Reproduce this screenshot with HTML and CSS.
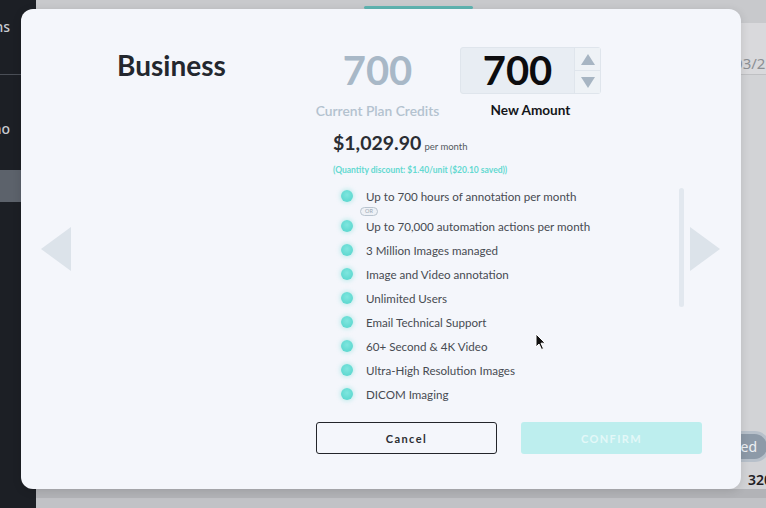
FILE: index.html
```html
<!DOCTYPE html>
<html>
<head>
<meta charset="utf-8">
<link rel="stylesheet" href="styles.css">
</head>
<body>
<div class="app">
  <aside class="sidebar">
    <div class="side-item first">Annotations</div>
    <div class="side-divider"></div>
    <div class="side-item second">Auto Annotation Demo</div>
    <div class="side-item selected"></div>
  </aside>
  <main class="content">
    <div class="topstrip"><span class="tab"></span></div>
    <div class="headrow"><span class="date">03/21</span></div>
    <div class="body-area"></div>
    <div class="badge-row"><span class="badge">Completed</span></div>
    <div class="count-row"><span class="count">3201</span></div>
    <div class="bottomstrip"></div>
  </main>
</div>

<div class="modal">
  <div class="arrow arrow-left"></div>
  <div class="arrow arrow-right"></div>
  <div class="modal-inner">
    <div class="plan-col">
      <h1 class="plan-name">Business</h1>
    </div>
    <div class="main-col">
      <div class="credits">
        <div class="credit current">
          <div class="credit-num">700</div>
          <div class="credit-label">Current Plan Credits</div>
        </div>
        <div class="credit new">
          <div class="amount-box">
            <div class="amount-val">700</div>
            <div class="spinner">
              <span class="spin up"></span>
              <span class="spin down"></span>
            </div>
          </div>
          <div class="credit-label dark">New Amount</div>
        </div>
      </div>
      <div class="price"><span class="price-val">$1,029.90</span><span class="per">per month</span></div>
      <div class="discount">(Quantity discount: $1.40/unit ($20.10 saved))</div>
      <div class="features-wrap">
        <ul class="features">
          <li><span class="dot"></span>Up to 700 hours of annotation per month</li>
          <li class="or-row"><span class="or">OR</span></li>
          <li><span class="dot"></span>Up to 70,000 automation actions per month</li>
          <li><span class="dot"></span>3 Million Images managed</li>
          <li><span class="dot"></span>Image and Video annotation</li>
          <li><span class="dot"></span>Unlimited Users</li>
          <li><span class="dot"></span>Email Technical Support</li>
          <li><span class="dot"></span>60+ Second &amp; 4K Video</li>
          <li><span class="dot"></span>Ultra-High Resolution Images</li>
          <li><span class="dot"></span>DICOM Imaging</li>
        </ul>
        <div class="scrollbar"></div>
      </div>
      <div class="actions">
        <button class="btn cancel">Cancel</button>
        <button class="btn confirm">CONFIRM</button>
      </div>
    </div>
  </div>
</div>

<svg class="cursor" width="12" height="18" viewBox="0 0 12 18">
  <path d="M1 1 L1 14 L4 11 L6.5 16.5 L8.5 15.6 L6 10.2 L10.2 10.2 Z" fill="#111" stroke="#fff" stroke-width="1"/>
</svg>
</body>
</html>
```
FILE: styles.css
```css
* { box-sizing: border-box; }
html, body { margin: 0; padding: 0; }
body {
  width: 766px;
  height: 508px;
  overflow: hidden;
  font-family: "Lato", "Noto Sans", sans-serif;
  background: #c6c7cb;
  position: relative;
}
.app {
  display: flex;
  width: 766px;
  height: 508px;
}
.sidebar {
  width: 36px;
  flex: 0 0 36px;
  background: #1c1f25;
  display: flex;
  flex-direction: column;
  overflow: hidden;
}
.side-item {
  display: flex;
  justify-content: flex-end;
  white-space: nowrap;
  padding-right: 26px;
  color: #c9ccd2;
  font-size: 14px;
  font-family: "Noto Sans", sans-serif;
  font-weight: 500;
}
.side-item.first { margin-top: 17px; height: 22px; }
.side-divider { height: 1px; background: #4a4e56; margin-top: 35px; }
.side-item.second { margin-top: 44px; height: 22px; }
.side-item.selected { margin-top: 29px; height: 32px; background: #5c626b; }

.content {
  flex: 1;
  display: flex;
  flex-direction: column;
  background: #c9cacd;
}
.topstrip {
  height: 23px;
  background: #c8c9cc;
  position: relative;
}
.tab {
  position: absolute;
  left: 328px;
  top: 6px;
  width: 109px;
  height: 3px;
  background: #5fb5b2;
  border-radius: 2px;
}
.headrow {
  height: 52px;
  background: #d9d9dc;
  border-bottom: 1px solid #bfc0c3;
  display: flex;
  justify-content: flex-end;
  align-items: flex-end;
  padding-bottom: 1px;
  overflow: hidden;
}
.date {
  color: #8c8f94;
  font-family: "Noto Sans", sans-serif;
  font-size: 15px;
  margin-right: -8px;
}
.body-area { flex: 1; background: #d2d3d6; }
.badge-row {
  height: 40px;
  background: #d2d3d6;
  display: flex;
  justify-content: flex-end;
  align-items: center;
  overflow: hidden;
}
.badge {
  background: #8d9aa8;
  color: #eef1f4;
  font-family: "Noto Sans", sans-serif;
  font-size: 14px;
  padding: 3px 10px;
  border-radius: 14px;
  box-shadow: 0 0 0 3px #b7c0ca;
  margin-right: -1px;
}
.count-row {
  height: 23px;
  background: #d2d3d6;
  display: flex;
  justify-content: flex-end;
  align-items: flex-end;
  overflow: hidden;
}
.count {
  font-family: "Noto Sans", sans-serif;
  font-size: 14px;
  line-height: 18px;
  font-weight: 600;
  color: #1f2024;
  margin-right: -14px;
}
.bottomstrip {
  height: 19px;
  background: linear-gradient(#b2b3b7 0 9px, #c1c2c6 9px);
}

.modal {
  position: absolute;
  left: 21px;
  top: 9px;
  width: 720px;
  height: 480px;
  background: #f4f6fb;
  border-radius: 12px;
  box-shadow: 0 2px 10px rgba(0,0,0,0.12);
}
.arrow {
  position: absolute;
  top: 218px;
  width: 0;
  height: 0;
  border-top: 22px solid transparent;
  border-bottom: 22px solid transparent;
}
.arrow-left { left: 20px; border-right: 30px solid #dce3ea; }
.arrow-right { left: 669px; border-left: 30px solid #dce3ea; }

.modal-inner {
  display: flex;
  padding: 38px 0 0 96px;
}
.plan-col { width: 199px; }
.plan-name {
  margin: 1px 0 0;
  font-size: 28px;
  line-height: 34px;
  font-weight: 700;
  color: #23272e;
}
.main-col {
  width: 386px;
  display: flex;
  flex-direction: column;
}
.credits {
  display: flex;
  gap: 21px;
}
.credit {
  display: flex;
  flex-direction: column;
  align-items: center;
}
.credit.current { width: 123px; }
.credit-num {
  height: 47px;
  line-height: 47px;
  font-size: 40px;
  font-weight: 700;
  color: #a8b8c7;
}
.credit-label {
  margin-top: 9px;
  font-size: 13.8px;
  line-height: 16px;
  color: #b3c2cf;
  font-weight: 600;
  white-space: nowrap;
}
.credit-label.dark { color: #14161a; margin-top: 8px; font-weight: 700; font-size: 13.6px; }
.amount-box {
  display: flex;
  width: 141px;
  height: 47px;
  background: #e8edf3;
  border: 1px solid #dfe5ec;
  border-radius: 3px;
}
.amount-val {
  width: 113px;
  text-align: center;
  font-size: 40px;
  line-height: 45px;
  font-weight: 700;
  color: #0c0c0e;
}
.spinner {
  flex: 1;
  border-left: 1px solid #dfe5ec;
  background: #eef2f6;
  display: flex;
  flex-direction: column;
}
.spin {
  flex: 1;
  display: flex;
  align-items: center;
  justify-content: center;
}
.spin.up { border-bottom: 1px solid #dfe5ec; }
.spin.up::before {
  content: "";
  border-left: 7px solid transparent;
  border-right: 7px solid transparent;
  border-bottom: 11px solid #a7b5c3;
}
.spin.down::before {
  content: "";
  border-left: 7px solid transparent;
  border-right: 7px solid transparent;
  border-top: 11px solid #a7b5c3;
}
.price {
  margin: 12px 0 0 17px;
  display: flex;
  align-items: baseline;
  gap: 3px;
}
.price-val {
  font-size: 19.5px;
  font-weight: 700;
  color: #2a2d33;
  line-height: 24px;
}
.per {
  font-size: 9.5px;
  color: #555a61;
}
.discount {
  margin: 9px 0 0 17px;
  font-size: 8.5px;
  font-weight: 700;
  color: #63d9d1;
  line-height: 12px;
  white-space: nowrap;
}
.features-wrap {
  position: relative;
  height: 226px;
  margin-top: 8px;
  overflow: hidden;
}
.features {
  list-style: none;
  margin: 0;
  padding: 0 0 0 25px;
}
.features li {
  display: flex;
  align-items: center;
  height: 24px;
  font-size: 11.6px;
  color: #474b52;
  white-space: nowrap;
}
.features li.or-row { height: 6px; }
.or {
  margin-left: 19px;
  margin-top: 1px;
  font-size: 5.5px;
  line-height: 7px;
  padding: 0 4px;
  border: 1px solid #b9c4cf;
  border-radius: 5px;
  color: #9aa6b2;
  background: #eef1f6;
}
.dot {
  width: 12px;
  height: 12px;
  border-radius: 50%;
  background: radial-gradient(circle at 50% 40%, #7fe6df, #52d3ca);
  box-shadow: 0 0 4px 1px rgba(90, 215, 205, 0.35);
  margin-right: 13px;
}
.scrollbar {
  position: absolute;
  left: 363px;
  top: 4px;
  width: 5px;
  height: 119px;
  border-radius: 3px;
  background: #e2e8ef;
}
.actions {
  display: flex;
  gap: 24px;
  margin-top: 12px;
}
.btn {
  width: 181px;
  height: 32px;
  border-radius: 3px;
  font-family: "Lato", sans-serif;
  font-size: 11px;
  font-weight: 700;
  letter-spacing: 1.4px;
  cursor: pointer;
}
.cancel {
  background: transparent;
  border: 1px solid #23252a;
  color: #2b2e33;
}
.confirm {
  background: #bdeeee;
  border: none;
  color: #e3f8f8;
}
.cursor {
  position: absolute;
  left: 535px;
  top: 333px;
}
```
